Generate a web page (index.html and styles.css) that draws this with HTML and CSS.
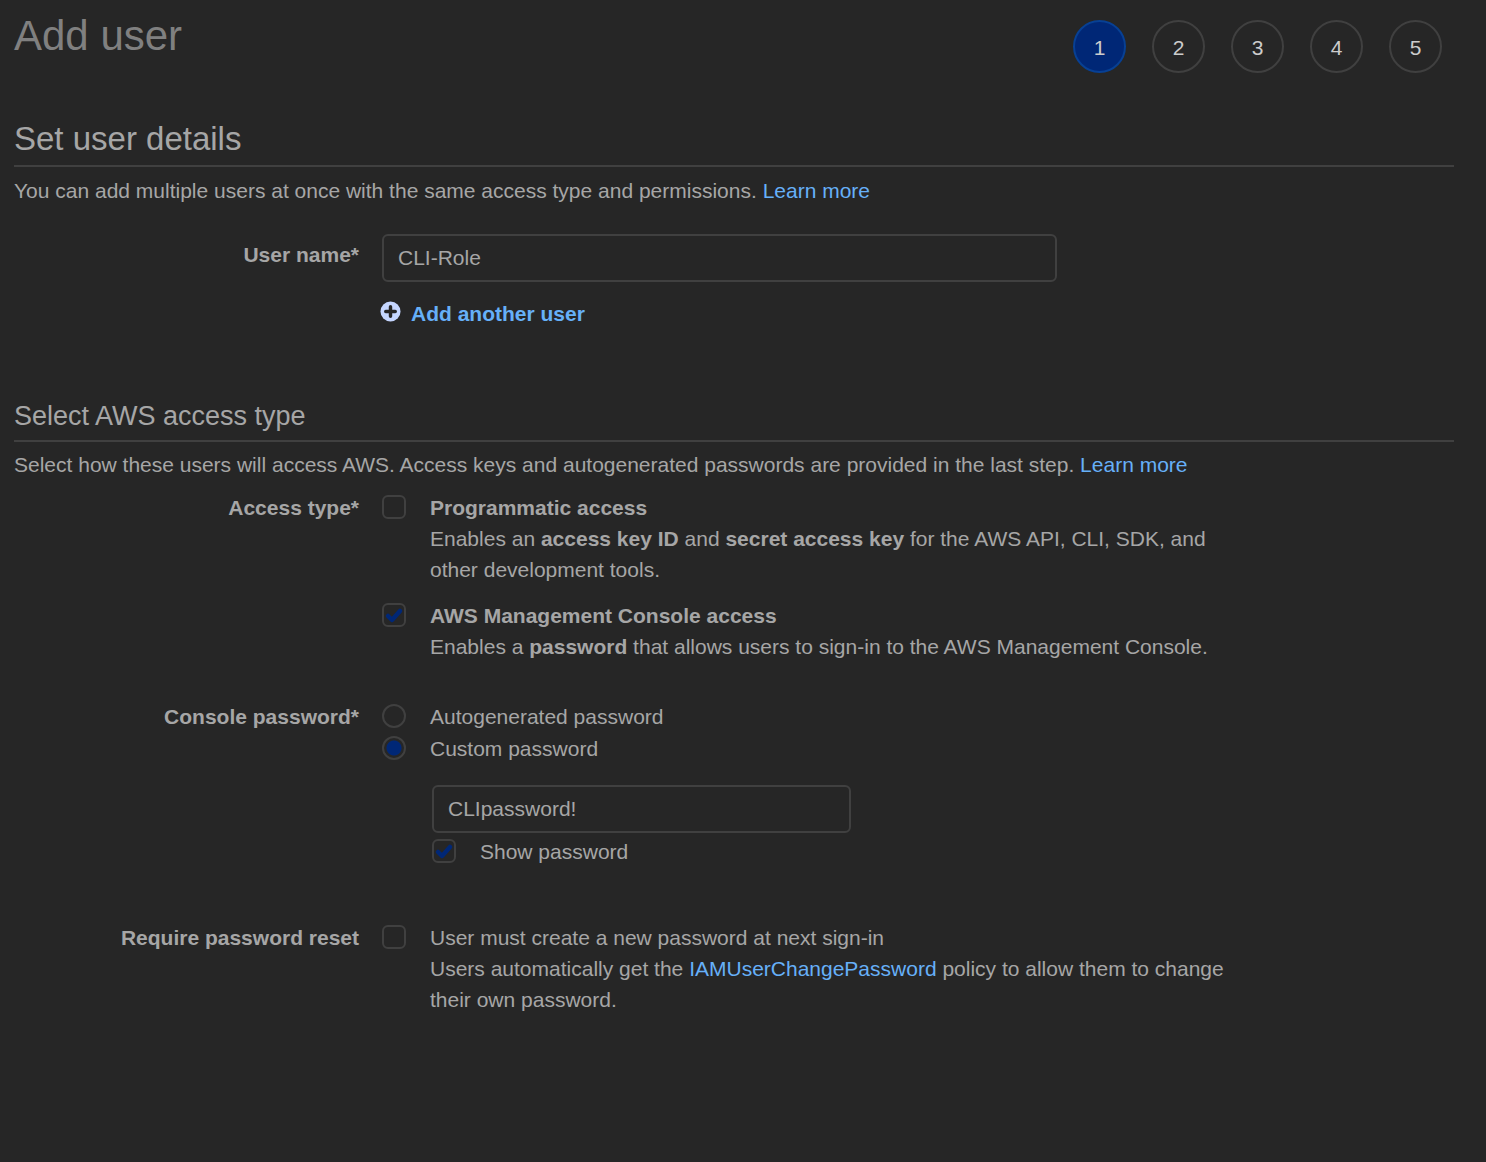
FILE: index.html
```html
<!DOCTYPE html>
<html lang="en">
<head>
<meta charset="utf-8">
<meta name="viewport" content="width=device-width, initial-scale=1">
<title>Add user</title>
<link rel="stylesheet" href="styles.css">
</head>
<body>
<main class="page">
  <header class="page-header">
    <h1 class="page-title">Add user</h1>
    <nav aria-label="Steps">
      <ol class="steps">
        <li class="step step-current" aria-current="step">1</li>
        <li class="step">2</li>
        <li class="step">3</li>
        <li class="step">4</li>
        <li class="step">5</li>
      </ol>
    </nav>
  </header>
  <form>
    <section class="details">
      <h2 class="section-title">Set user details</h2>
      <p class="intro">You can add multiple users at once with the same access type and permissions. <a href="#">Learn more</a></p>
      <div class="row">
        <label class="row-label name-label" for="user-name">User name*</label>
        <div class="name-field">
          <input class="text-input" id="user-name" type="text" value="CLI-Role">
          <button class="add-user" type="button">
            <svg class="add-icon" viewBox="0 0 22 22" aria-hidden="true">
              <circle cx="11" cy="11" r="10.5" fill="#c5d6ff"/>
              <path d="M11 6v10M6 11h10" stroke="#262626" stroke-width="3.600" stroke-linecap="round"/>
            </svg>
            Add another user
          </button>
        </div>
      </div>
    </section>
    <section class="access">
      <h3 class="subsection-title">Select AWS access type</h3>
      <p class="intro">Select how these users will access AWS. Access keys and autogenerated passwords are provided in the last step. <a href="#">Learn more</a></p>
      <div class="row" role="group" aria-labelledby="access-label">
        <span class="row-label" id="access-label">Access type*</span>
        <div class="access-options">
          <div class="option">
            <input class="check" type="checkbox" id="programmatic">
            <div>
              <label for="programmatic"><b>Programmatic access</b></label>
              <p>Enables an <b>access key ID</b> and <b>secret access key</b> for the AWS API, CLI, SDK, and other development tools.</p>
            </div>
          </div>
          <div class="option">
            <input class="check" type="checkbox" id="console" checked>
            <div>
              <label for="console"><b>AWS Management Console access</b></label>
              <p>Enables a <b>password</b> that allows users to sign-in to the AWS Management Console.</p>
            </div>
          </div>
        </div>
      </div>
      <div class="row password-row" role="group" aria-labelledby="password-label">
        <span class="row-label" id="password-label">Console password*</span>
        <div class="password-options">
          <div class="option">
            <input class="check radio" type="radio" name="password-type" id="auto">
            <label for="auto">Autogenerated password</label>
          </div>
          <div class="option">
            <input class="check radio" type="radio" name="password-type" id="custom" checked>
            <label for="custom">Custom password</label>
          </div>
          <div class="custom-password">
            <input class="text-input" type="text" aria-label="Custom password" value="CLIpassword!">
            <div class="option">
              <input class="check" type="checkbox" id="show" checked>
              <label for="show">Show password</label>
            </div>
          </div>
        </div>
      </div>
      <div class="row reset-row" role="group" aria-labelledby="reset-label">
        <span class="row-label" id="reset-label">Require password reset</span>
        <div class="option">
          <input class="check" type="checkbox" id="reset">
          <div>
            <label for="reset">User must create a new password at next sign-in</label>
            <p>Users automatically get the <a href="#">IAMUserChangePassword</a> policy to allow them to change their own password.</p>
          </div>
        </div>
      </div>
    </section>
  </form>
</main>
</body>
</html>
```
FILE: styles.css
```css
* {
  box-sizing: border-box;
}

body {
  margin: 0;
  background: #262626;
  color: #a6a6a6;
  font: 21px/31px "Liberation Sans", Arial, sans-serif;
}

h1, h2, h3, p, ol {
  margin: 0;
  padding: 0;
  font-weight: normal;
}

a {
  color: #66b0f8;
  text-decoration: none;
}

.page {
  padding: 12px 32px 60px 14px;
}

.page-header {
  display: flex;
  justify-content: space-between;
  padding-right: 12px;
}

.page-title {
  color: #808080;
  font-size: 42px;
  line-height: 48px;
}

.steps {
  display: flex;
  gap: 26px;
  padding-top: 8px;
  list-style: none;
}

.step {
  width: 53px;
  height: 53px;
  border: 2px solid #404040;
  border-radius: 50%;
  color: #ccc;
  line-height: 51px;
  text-align: center;
}

.step-current {
  border-color: #074094;
  background: #002776;
}

.section-title,
.subsection-title {
  border-bottom: 2px solid #404040;
}

.details {
  padding-top: 47px;
}

.section-title {
  margin-bottom: 8px;
  padding-bottom: 7px;
  font-size: 33px;
  line-height: 38px;
}

.subsection-title {
  margin-bottom: 7px;
  padding-bottom: 8px;
  font-size: 27px;
  line-height: 32px;
}

.row {
  display: grid;
  grid-template-columns: minmax(0, 345px) minmax(0, 848px);
  gap: 23px;
}

.row-label {
  font-weight: bold;
  text-align: right;
}

.details .row {
  padding-top: 28px;
}

.name-label {
  padding-top: 5px;
}

.name-field {
  display: flex;
  flex-direction: column;
  align-items: flex-start;
  gap: 16px;
}

.text-input {
  width: 100%;
  max-width: 675px;
  height: 48px;
  padding: 0 14px;
  border: 2px solid #404040;
  border-radius: 6px;
  background: transparent;
  color: inherit;
  font: inherit;
}

.add-user {
  display: flex;
  gap: 10px;
  margin-left: -2px;
  padding: 0;
  border: 0;
  background: none;
  color: #66b0f8;
  font: inherit;
  font-weight: bold;
}

.add-icon {
  width: 21px;
  height: 21px;
  margin-top: 3px;
}

.access {
  padding-top: 71px;
}

.access .row {
  padding-top: 12px;
}

.access-options {
  display: grid;
  gap: 15px;
}

.option {
  display: flex;
  gap: 24px;
}

.check {
  flex: none;
  appearance: none;
  width: 24px;
  height: 24px;
  margin: 3px 0 0;
  border: 2px solid #404040;
  border-radius: 6px;
}

.check:checked {
  background: url("data:image/svg+xml,%3Csvg xmlns='http://www.w3.org/2000/svg' width='20' height='20' viewBox='0 0 20 20'%3E%3Cpath d='M4 11l4 4 8-9' fill='none' stroke='%23002776' stroke-width='4.500' stroke-linecap='round' stroke-linejoin='round'/%3E%3C/svg%3E") center / 20px 20px no-repeat;
}

.radio {
  border-radius: 50%;
}

.radio:checked {
  background: radial-gradient(circle, #002776 7px, transparent 8px);
}

.access .password-row {
  padding-top: 39px;
}

.password-options {
  display: grid;
  gap: 1px;
}

.custom-password {
  display: grid;
  gap: 3px;
  width: 100%;
  max-width: 469px;
  padding: 20px 0 0 50px;
}

.access .reset-row {
  padding-top: 55px;
}
```
